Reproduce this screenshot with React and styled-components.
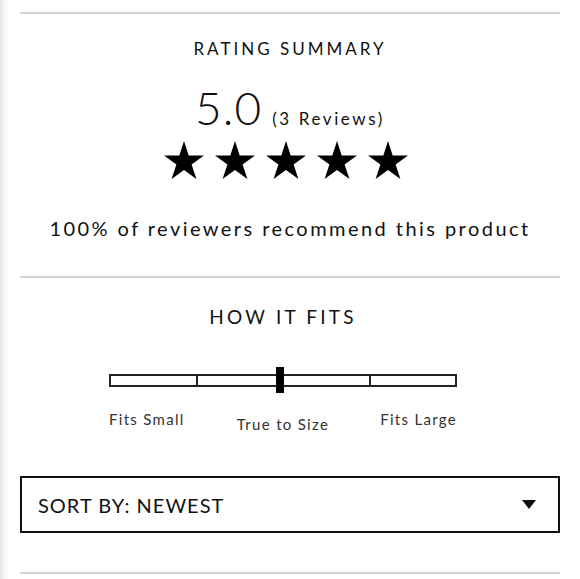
import React from 'react';
import styled, {createGlobalStyle} from 'styled-components';

const GlobalStyle = createGlobalStyle`
    html, body {
        margin: 0;
        padding: 0;
        background: #fff;
    }
    body {
        font-family: Lato, "Liberation Sans", sans-serif;
        color: #111;
    }
`;

const Page = styled.div`
    width: 580px;
    height: 579px;
    box-sizing: border-box;
    padding: 12px 20px 0 20px;
    background: linear-gradient(to right, #e6e6e6 0, #f6f6f6 4px, #fff 9px);
    overflow: hidden;
`;

const Divider = styled.hr`
    margin: 0;
    border: 0;
    height: 2px;
    background: #d2d2d2;
`;

const Section = styled.section`
    display: flex;
    flex-direction: column;
    align-items: center;
`;

const Heading = styled.h2`
    margin: ${p => p.$top}px ${p => p.$shift || 0}px 0 0;
    font-size: ${p => p.$size}px;
    line-height: 24px;
    font-weight: 400;
    letter-spacing: ${p => p.$spacing}px;
    text-transform: uppercase;
`;

const ScoreRow = styled.div`
    margin-top: 25px;
    display: flex;
    align-items: baseline;
    gap: 10px;
`;

const Score = styled.span`
    font-size: 46px;
    line-height: 44px;
    font-weight: 300;
    letter-spacing: 1px;
`;

const Count = styled.span`
    font-size: 17px;
    letter-spacing: 2.6px;
`;

const Stars = styled.div`
    margin: 11px 8px 0 0;
    display: flex;
    gap: 11px;
`;

const Recommend = styled.p`
    margin: 37px 0 36px 0;
    font-size: 20px;
    line-height: 24px;
    letter-spacing: 2.45px;
`;

const Fit = styled.div`
    margin: 38px 14px 0 0;
    width: 348px;
`;

const Track = styled.div`
    position: relative;
    height: 26px;
    display: flex;
    align-items: center;
`;

const Bar = styled.div`
    flex: 1;
    height: 13px;
    box-sizing: border-box;
    border: 2px solid #222;
    display: flex;
`;

const Segment = styled.div`
    flex: 1;
    & + & {
        border-left: 2px solid #222;
    }
`;

const Thumb = styled.div`
    position: absolute;
    top: 0;
    width: 8px;
    height: 26px;
    margin-left: -4px;
    background: #000;
`;

const Labels = styled.div`
    margin-top: 16px;
    display: grid;
    grid-template-columns: 1fr 1fr 1fr;
    font-size: 15px;
    line-height: 20px;
    color: #333;
    letter-spacing: 1.3px;
`;

const Label = styled.span`
    text-align: ${p => p.$align};
    margin-top: ${p => p.$offset || 0}px;
    white-space: nowrap;
`;

const Sort = styled.button`
    margin-top: 42px;
    width: 100%;
    height: 57px;
    box-sizing: border-box;
    border: 2px solid #111;
    background: #fff;
    display: flex;
    align-items: center;
    justify-content: space-between;
    padding: 0 22px 0 16px;
    font-family: inherit;
    font-size: 20px;
    letter-spacing: 1px;
    color: #111;
    cursor: pointer;
`;

const Bottom = styled(Divider)`
    margin-top: 39px;
`;

const Star = () => (
    <svg width="40" height="38" viewBox="0 0 40 38">
        <polygon
            fill="#000"
            points="20,0 24.7,14.5 40,14.5 27.6,23.5 32.4,38 20,29 7.6,38 12.4,23.5 0,14.5 15.3,14.5"
        />
    </svg>
);

const Caret = () => (
    <svg width="14" height="9" viewBox="0 0 14 9">
        <polygon fill="#111" points="0,0 14,0 7,9"/>
    </svg>
);

export default function App() {
    const fitValue = 49.1;

    return (
        <Page>
            <GlobalStyle/>
            <Divider/>
            <Section>
                <Heading $top={23} $size={17} $spacing={3}>Rating Summary</Heading>
                <ScoreRow>
                    <Score>5.0</Score>
                    <Count>(3 Reviews)</Count>
                </ScoreRow>
                <Stars>
                    {[1, 2, 3, 4, 5].map(i => <Star key={i}/>)}
                </Stars>
                <Recommend>100% of reviewers recommend this product</Recommend>
            </Section>
            <Divider/>
            <Section>
                <Heading $top={27} $size={19} $spacing={3.2} $shift={14}>How it fits</Heading>
                <Fit>
                    <Track>
                        <Bar>
                            <Segment/><Segment/><Segment/><Segment/>
                        </Bar>
                        <Thumb style={{left: `${fitValue}%`}}/>
                    </Track>
                    <Labels>
                        <Label $align="left">Fits Small</Label>
                        <Label $align="center" $offset={5}>True to Size</Label>
                        <Label $align="right">Fits Large</Label>
                    </Labels>
                </Fit>
            </Section>
            <Sort>
                <span>SORT BY: NEWEST</span>
                <Caret/>
            </Sort>
            <Bottom/>
        </Page>
    );
}
